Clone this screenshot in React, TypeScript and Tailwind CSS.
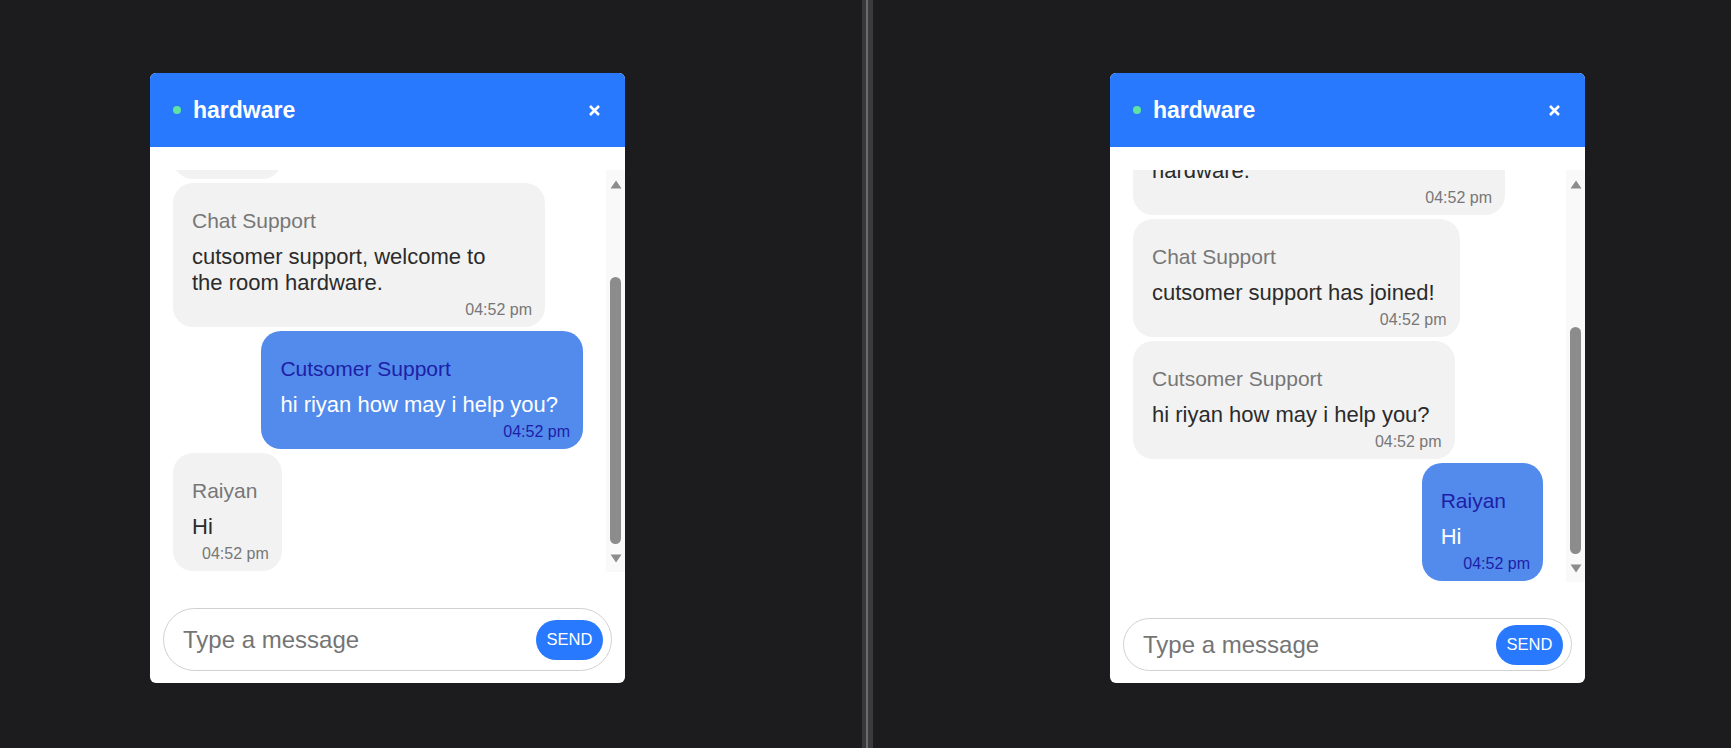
import React from "react"

type Message = {
  name: string
  text: string
  time: string
  own?: boolean
}

const leftMessages: Message[] = [
  { name: "Raiyan", text: "hi", time: "04:52 pm" },
  { name: "Chat Support", text: "cutsomer support, welcome to the room hardware.", time: "04:52 pm" },
  { name: "Cutsomer Support", text: "hi riyan how may i help you?", time: "04:52 pm", own: true },
  { name: "Raiyan", text: "Hi", time: "04:52 pm" },
]

const rightMessages: Message[] = [
  { name: "Chat Support", text: "Raiyan, welcome to the room hardware.", time: "04:52 pm" },
  { name: "Chat Support", text: "cutsomer support has joined!", time: "04:52 pm" },
  { name: "Cutsomer Support", text: "hi riyan how may i help you?", time: "04:52 pm" },
  { name: "Raiyan", text: "Hi", time: "04:52 pm", own: true },
]

function Bubble({ msg }: { msg: Message }) {
  const own = msg.own
  return (
    <div className={`flex shrink-0 ${own ? "justify-end" : "justify-start"}`}>
      <div
        className={`max-w-[372px] rounded-[20px] pt-[26px] pb-[8px] pl-[19px] pr-[13px] ${
          own ? "bg-[#528bec]" : "bg-[#f2f2f2]"
        }`}
      >
        <div className={`text-[21px] leading-[24px] ${own ? "pr-[24px] text-[#1e1ea6]" : "text-[#777777]"}`}>
          {msg.name}
        </div>
        <p className={`mt-[11px] pr-[12px] text-[22px] leading-[26px] ${own ? "text-white" : "text-[#2b2b2b]"}`}>
          {msg.text}
        </p>
        <div
          className={`ml-[10px] mt-[4px] text-right text-[16px] leading-[19px] ${
            own ? "text-[#1e1ea6]" : "text-[#777777]"
          }`}
        >
          {msg.time}
        </div>
      </div>
    </div>
  )
}

function Scrollbar({ thumb }: { thumb: number }) {
  return (
    <div className="flex w-[19px] shrink-0 flex-col items-center bg-[#f9f9f9] pt-[10px] pb-[9px]">
      <svg width="12" height="9" viewBox="0 0 12 9">
        <path d="M6 0.5 L11.5 8.5 L0.5 8.5 Z" fill="#8c8c8c" />
      </svg>
      <div className="flex flex-1 flex-col justify-end pb-[10px]">
        <div className="w-[11px] rounded-full bg-[#8c8c8c]" style={{ height: thumb }} />
      </div>
      <svg width="12" height="9" viewBox="0 0 12 9">
        <path d="M0.5 0.5 L11.5 0.5 L6 8.5 Z" fill="#8c8c8c" />
      </svg>
    </div>
  )
}

function ChatWindow({
  messages,
  thumb,
  inputClass,
}: {
  messages: Message[]
  thumb: number
  inputClass: string
}) {
  return (
    <div className="flex h-[610px] w-[475px] flex-col overflow-hidden rounded-[6px] bg-white">
      {/* Header */}
      <div className="flex h-[74px] shrink-0 items-center bg-[#2979ff] pl-[23px] pr-[25px]">
        <span className="h-[8px] w-[8px] rounded-full bg-[#5ee3a1]" />
        <h2 className="ml-[12px] flex-1 text-[23px] font-bold text-white">hardware</h2>
        <button className="flex items-center justify-center">
          <svg width="11" height="11" viewBox="0 0 11 11">
            <path d="M1 1 L10 10 M10 1 L1 10" stroke="white" strokeWidth="2.6" />
          </svg>
        </button>
      </div>

      {/* Messages */}
      <div className="flex min-h-0 flex-1 flex-col pt-[23px]">
        <div className="flex min-h-0 flex-1">
          <div className="flex min-h-0 flex-1 flex-col justify-end gap-[4px] overflow-hidden px-[23px] pb-[1px]">
            {messages.map((m, i) => (
              <Bubble key={i} msg={m} />
            ))}
          </div>
          <Scrollbar thumb={thumb} />
        </div>
      </div>

      {/* Input */}
      <div className="shrink-0 px-[13px] pt-[36px] pb-[12px]">
        <div className={`flex items-center rounded-full border border-[#d0d0d0] pl-[19px] pr-[8px] ${inputClass}`}>
          <input
            className="min-w-0 flex-1 bg-transparent text-[24px] text-[#333] outline-none placeholder:text-[#757575]"
            placeholder="Type a message"
          />
          <button className="h-[40px] w-[67px] rounded-full bg-[#2979ff] text-[16.5px] text-white">SEND</button>
        </div>
      </div>
    </div>
  )
}

export default function App() {
  return (
    <div className="flex h-[748px] w-full bg-[#1c1c1e] font-['Liberation_Sans',Arial,sans-serif]">
      <div className="w-[862px] shrink-0 pl-[150px] pt-[73px]">
        <ChatWindow messages={leftMessages} thumb={267} inputClass="h-[63px]" />
      </div>

      {/* window split */}
      <div className="flex w-[11px] shrink-0">
        <div className="w-[4px] bg-[#38383a]" />
        <div className="w-[2px] bg-[#6c6c6c]" />
        <div className="w-[5px] bg-[#3b3b3d]" />
      </div>

      <div className="flex flex-1 justify-end pr-[146px] pt-[73px]">
        <ChatWindow messages={rightMessages} thumb={227} inputClass="h-[53px]" />
      </div>
    </div>
  )
}
